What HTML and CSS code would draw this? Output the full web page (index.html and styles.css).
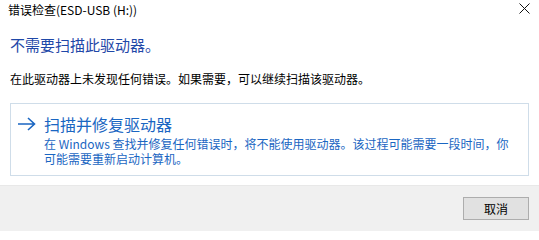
FILE: index.html
```html
<!DOCTYPE html>
<html lang="zh-CN">
<head>
<meta charset="utf-8">
<title>错误检查</title>
<link rel="stylesheet" href="styles.css">
</head>
<body>
<div class="window">
  <div class="titlebar">
    <span class="title">错误检查(ESD-USB (H:))</span>
    <svg class="close" width="11" height="11" viewBox="0 0 11 11"><path d="M0.5 0.5 L10.5 10.5 M10.5 0.5 L0.5 10.5" stroke="#111" stroke-width="1" fill="none"/></svg>
  </div>
  <div class="content">
    <h1 class="heading">不需要扫描此驱动器。</h1>
    <p class="desc">在此驱动器上未发现任何错误。如果需要，可以继续扫描该驱动器。</p>
    <div class="command">
      <svg class="arrow" width="19" height="14" viewBox="0 0 19 14"><path d="M1 7 H17.5 M11 1 L17.5 7 L11 13" stroke="#1a66c2" stroke-width="1.6" fill="none"/></svg>
      <div class="cmd-text">
        <div class="cmd-title">扫描并修复驱动器</div>
        <div class="cmd-desc">在 Windows 查找并修复任何错误时，将不能使用驱动器。该过程可能需要一段时间，你可能需要重新启动计算机。</div>
      </div>
    </div>
  </div>
  <div class="footer">
    <button class="btn">取消</button>
  </div>
</div>
</body>
</html>
```
FILE: styles.css
```css
html, body {
  margin: 0;
  padding: 0;
  background: #ffffff;
}
body {
  font-family: "Noto Sans CJK SC", "Noto Sans", sans-serif;
  font-size: 12px;
  color: #000;
}
.window {
  width: 539px;
  height: 231px;
  display: flex;
  flex-direction: column;
  overflow: hidden;
}
.titlebar {
  height: 20px;
  display: flex;
  align-items: center;
  justify-content: space-between;
  padding: 0 9px 0 8px;
  line-height: 20px;
}
.title {
  font-size: 12px;
  color: #000;
}
.close {
  display: block;
  margin-top: -4px;
}
.content {
  padding: 0 10px 0 10px;
}
.heading {
  margin: 15px 0 0 0;
  font-size: 15px;
  font-weight: normal;
  line-height: 20px;
  color: #1f48a8;
}
.desc {
  margin: 16px 0 0 0;
  font-size: 12px;
  line-height: 16px;
  color: #000;
}
.command {
  margin-top: 16px;
  border: 1px solid #cfdde9;
  display: flex;
  align-items: flex-start;
  gap: 8px;
  padding: 10px 10px 9px 6px;
}
.arrow {
  display: block;
  margin-top: 3px;
  flex: none;
}
.cmd-text {
  flex: 1;
}
.cmd-title {
  font-size: 16px;
  line-height: 20px;
  color: #1a66c2;
  margin-bottom: 2px;
}
.cmd-desc {
  font-size: 12px;
  line-height: 15px;
  color: #1a66c2;
  padding-right: 8px;
}
.footer {
  margin-top: 9px;
  flex: 1;
  background: #f0f0f0;
  border-top: 1px solid #e8e8e8;
  display: flex;
  justify-content: flex-end;
  align-items: flex-start;
  padding: 11px 10px 0 0;
}
.btn {
  width: 66px;
  height: 23px;
  background: #e1e1e1;
  border: 1px solid #adadad;
  font-family: "Noto Sans CJK SC", "Noto Sans", sans-serif;
  font-size: 12px;
  line-height: 19px;
  color: #000;
  padding: 0;
}
```
